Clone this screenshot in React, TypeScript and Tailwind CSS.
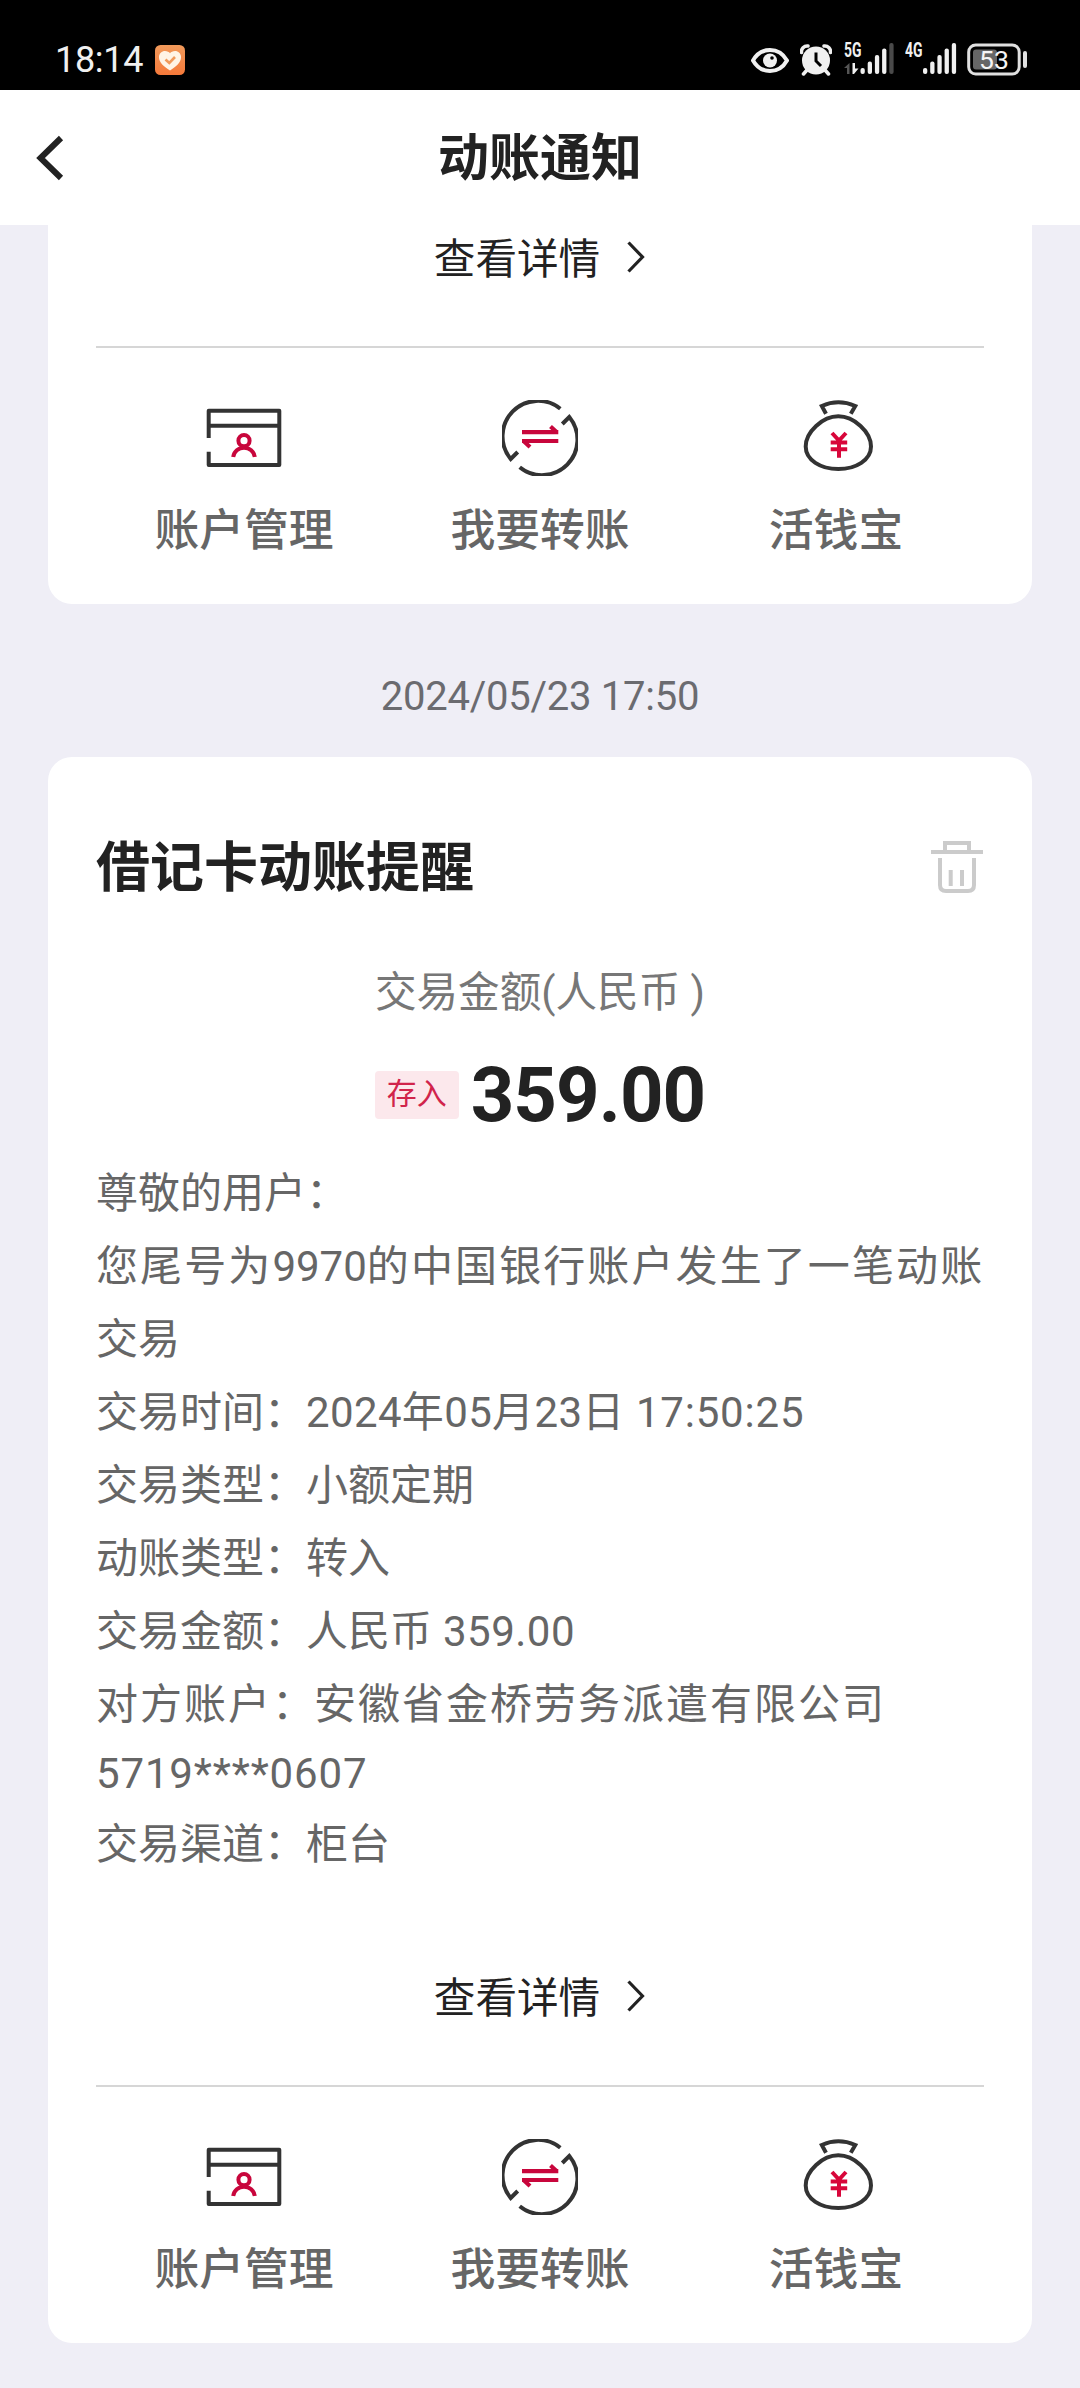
import React from 'react';

const signalBars = [
  { x: 0, top: 25 },
  { x: 7.2, top: 18.5 },
  { x: 14.4, top: 12 },
  { x: 21.6, top: 5.5 },
  { x: 28.8, top: 0 },
];

function Signal({ label, weak }: { label: string; weak?: boolean }) {
  return (
    <svg width="52" height="36" viewBox="0 0 52 36">
      <text x="0" y="17" fill="#f0f0f0" fontSize="19.5" fontWeight="700" textLength="17.5" lengthAdjust="spacingAndGlyphs">
        {label}
      </text>
      {weak && (
        <>
          <path d="M0 28L5.5 23V34H3V28Z" fill="#555" />
          <path d="M8.5 23H11V28.5H14.5L10 34H8.5Z" fill="#f0f0f0" />
        </>
      )}
      {signalBars.map((bar, i) => (
        <rect
          key={bar.x}
          x={bar.x + (weak ? 16.5 : 18)}
          y={bar.top + 3}
          width="4.3"
          height={31 - bar.top}
          rx="2"
          fill={weak && i === 4 ? '#4a4a4a' : '#f0f0f0'}
        />
      ))}
    </svg>
  );
}

function StatusBar() {
  return (
    <div className="flex h-[90px] items-start justify-between bg-black pt-[40px] pr-[52px] pl-[55px]">
      <div className="flex items-center">
        <span className="w-[100px] text-[36px] leading-[40px] tracking-[-0.3px] text-[#f0f0f0]">18:14</span>
        <svg width="30" height="30" viewBox="0 0 30 30">
          <defs>
            <linearGradient id="heart" x1="0" y1="0" x2="0" y2="1">
              <stop offset="0" stopColor="#f19a5b" />
              <stop offset="1" stopColor="#f5793a" />
            </linearGradient>
          </defs>
          <rect width="30" height="30" rx="5.5" fill="url(#heart)" />
          <path d="M15 25.5C9 21.5 4 17.5 4 12.2C4 8.5 6.8 6 10 6C12.2 6 14 7 15 8.2C16 7 17.8 6 20 6C23.2 6 26 8.5 26 12.2C26 17.5 21 21.5 15 25.5Z" fill="#fff4e6" />
          <path d="M10.5 14.5L14.3 18L20 12" fill="none" stroke="#f19a5b" strokeWidth="2.6" />
        </svg>
      </div>
      <div className="flex items-start">
        <svg width="38" height="40" viewBox="0 0 38 40">
          <path d="M2 20.5C6 13.5 12 10 19 10C26 10 32 13.5 36 20.5C32 27.5 26 31 19 31C12 31 6 27.5 2 20.5Z" fill="none" stroke="#f0f0f0" strokeWidth="4" />
          <circle cx="19" cy="20.5" r="7" fill="#f0f0f0" />
          <circle cx="21" cy="18" r="1.8" fill="#000" />
        </svg>
        <svg className="ml-[11px]" width="32" height="40" viewBox="0 0 32 40">
          <circle cx="16" cy="20.5" r="14" fill="#f0f0f0" />
          <path d="M1.5 12.5C1 9 4 5.5 8 6M30.5 12.5C31 9 28 5.5 24 6M7 30L3.5 34M25 30L28.5 34" fill="none" stroke="#f0f0f0" strokeWidth="3.5" strokeLinecap="round" />
          <path d="M16 12.5V21L21 26" fill="none" stroke="#000" strokeWidth="3" />
        </svg>
        <div className="ml-[12px]">
          <Signal label="5G" weak />
        </div>
        <div className="ml-[9px]">
          <Signal label="4G" />
        </div>
        <svg className="ml-[10px]" width="61" height="40" viewBox="0 0 61 40">
          <rect x="1.7" y="5" width="50.5" height="29" rx="7" fill="none" stroke="#e0e0e0" strokeWidth="3" />
          <rect x="6" y="9.5" width="24" height="20" rx="3" fill="#666" />
          <rect x="56" y="11" width="4" height="17" rx="2" fill="#e0e0e0" />
          <text x="12" y="29" fill="#f5f5f5" fontSize="26.5" textLength="30">
            53
          </text>
        </svg>
      </div>
    </div>
  );
}

function AccountIcon() {
  return (
    <svg width="76" height="76" viewBox="0 0 76 76" fill="none" strokeWidth="4">
      <path d="M2.7 38V10.7H73.3V65H2.7V51.7M2.7 25.7H73.3" stroke="#333" strokeLinejoin="round" />
      <circle cx="38" cy="40.7" r="5.6" stroke="#c8063c" />
      <path d="M27.2 57A10.9 10.8 0 0 1 48.8 57" stroke="#c8063c" />
    </svg>
  );
}

function TransferIcon() {
  return (
    <svg width="76" height="76" viewBox="0 0 76 76" fill="none" strokeWidth="4">
      <path d="M58.3 8.7A35.5 35.5 0 0 0 8.7 59L15.7 52" stroke="#333" />
      <path d="M17.7 67.3A35.5 35.5 0 0 0 67.3 17L60.3 24" stroke="#333" />
      <path d="M20 32.2H56.3M20 41H56.3M48.5 26.5L54.8 32.2M21.5 41L28 47" stroke="#c8063c" strokeWidth="4.2" />
    </svg>
  );
}

function MoneyBagIcon() {
  return (
    <svg width="76" height="76" viewBox="0 0 76 76" fill="none" strokeWidth="4">
      <path d="M40.3 16.3C56 16.3 73 32 73 46.5C73 60 58 69 40.3 69C22.6 69 7.7 60 7.7 46.5C7.7 32 24.6 16.3 40.3 16.3Z" stroke="#333" />
      <path d="M28 13.7L23.8 6Q40.3 -1.3 57.3 6L52.8 13.7" stroke="#333" />
      <path d="M34 33L41 40.5L48 33M41 40.5V57.7M32.7 42.5H49.2M32.7 49.2H49.2" stroke="#d8063a" />
    </svg>
  );
}

const actions = [
  { name: '账户管理', icon: <AccountIcon /> },
  { name: '我要转账', icon: <TransferIcon /> },
  { name: '活钱宝', icon: <MoneyBagIcon /> },
];

function CardFooter() {
  return (
    <div className="h-[376px]">
      <div className="flex h-[60px] items-center justify-center pr-[1px] text-[41.6px] text-[#222]">
        <span className="pt-[3px] leading-[60px]">查看详情</span>
        <svg className="ml-[27px]" width="18" height="34" viewBox="0 0 18 34">
          <path d="M1.5 1.5L15.5 16L1.5 30.5" fill="none" stroke="#222" strokeWidth="3.2" />
        </svg>
      </div>
      <div className="mt-[58px] h-[2px] bg-[#d6d6d6]" />
      <div className="grid grid-cols-3 pt-[52px]">
        {actions.map((action) => (
          <div key={action.name} className="flex flex-col items-center">
            {action.icon}
            <span className="mt-[25px] text-[44.8px] leading-[60px] font-medium text-[#666]">{action.name}</span>
          </div>
        ))}
      </div>
    </div>
  );
}

export default function App() {
  return (
    <div className="h-[2388px] w-[1080px] overflow-hidden bg-[#efeef6] font-[Roboto,'Noto_Sans_CJK_SC',sans-serif]">
      <StatusBar />
      <div className="grid h-[135px] grid-cols-[1fr_auto_1fr] items-center bg-white">
        <svg className="ml-[36px]" width="28" height="48" viewBox="0 0 28 48">
          <path d="M25 4L4.5 24L25 44" fill="none" stroke="#222" strokeWidth="6" />
        </svg>
        <h1 className="pt-[3px] text-[51px] leading-[60px] font-bold text-[#222]">动账通知</h1>
      </div>

      <div className="mx-[48px] h-[379px] rounded-b-[24px] bg-white px-[48px] pt-[3px]">
        <CardFooter />
      </div>

      <div className="flex h-[153px] items-center justify-center pt-[33px] text-[40px] leading-[60px] tracking-[-0.25px] text-[#6b6b70]">
        2024/05/23 17:50
      </div>

      <div className="mx-[48px] h-[1586px] rounded-[24px] bg-white px-[48px] pt-[80px]">
        <div className="flex h-[60px] items-center justify-between">
          <h2 className="pt-[4px] text-[54px] leading-[60px] font-bold text-[#222]">借记卡动账提醒</h2>
          <svg width="53" height="53" viewBox="0 0 53 53" fill="none" stroke="#cbcbcb" strokeWidth="4">
            <path d="M0 11H52M14 11V2H38V11" />
            <path d="M9 17V44Q9 50 15 50H37Q43 50 43 44V17M19.7 29V45M31 29V45" />
          </svg>
        </div>
        <div className="mt-[66px] text-center text-[41.6px] leading-[60px] text-[#777]">交易金额(人民币 )</div>
        <div className="mt-[32px] flex h-[80px] items-center justify-center">
          <span className="h-[48px] w-[84px] rounded-[4px] bg-[#fce8ec] text-center text-[30px] leading-[46px] text-[#d1244b]">存入</span>
          <span className="ml-[12px] text-[76px] leading-[80px] font-bold tracking-[-0.9px] text-[#222]">359.00</span>
        </div>
        <div className="mt-[22px] mb-[86px] text-[42px] leading-[73px] whitespace-nowrap text-[#666]">
          <p>尊敬的用户：</p>
          <p className="tracking-[2.1px]">
            您尾号为<span className="tracking-normal">9970</span>的中国银行账户发生了一笔动账
          </p>
          <p>交易</p>
          <p>
            交易时间：<span className="tracking-[0.35px]">2024年05月23日</span>
            <span className="tracking-[0.8px]"> 17:50:25</span>
          </p>
          <p>交易类型：小额定期</p>
          <p>动账类型：转入</p>
          <p>
            交易金额：人民币<span className="tracking-[0.5px]"> 359.00</span>
          </p>
          <p className="tracking-[2px]">
            对方账户<span className="tracking-normal">：</span>安徽省金桥劳务派遣有限公司
          </p>
          <p className="h-[67px] leading-[65px] tracking-[0.85px]">5719****0607</p>
          <p>交易渠道：柜台</p>
        </div>
        <CardFooter />
      </div>
    </div>
  );
}
